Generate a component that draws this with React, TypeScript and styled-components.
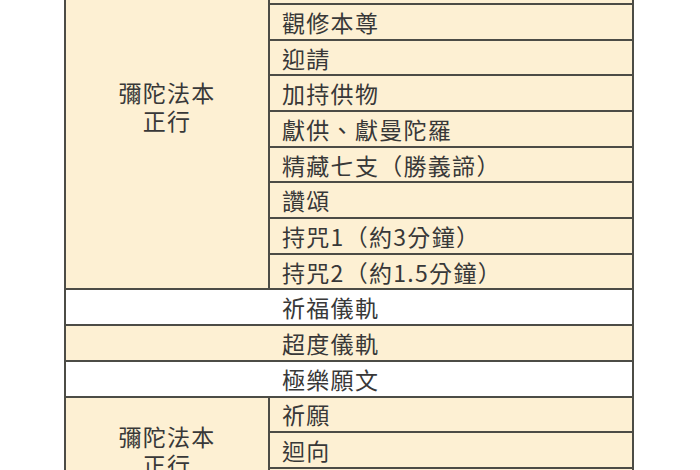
import React from 'react';
import styled, { createGlobalStyle } from 'styled-components';

const GlobalStyle = createGlobalStyle`
  html, body {
    margin: 0;
    padding: 0;
    background: #ffffff;
    overflow: hidden;
  }
  body {
    font-family: "Noto Sans CJK TC", "Noto Sans", sans-serif;
  }
`;

type Step = { label: string; tall?: boolean };

type Block =
  | { kind: 'group'; title: string[]; steps: Step[] }
  | { kind: 'single'; label: string; tone: 'white' | 'cream' };

// the first two steps sit above the visible crop
const blocks: Block[] = [
  {
    kind: 'group',
    title: ['彌陀法本', '正行'],
    steps: [
      { label: '皈依發心', tall: true },
      { label: '淨除障礙' },
      { label: '觀修本尊' },
      { label: '迎請' },
      { label: '加持供物' },
      { label: '獻供、獻曼陀羅' },
      { label: '精藏七支（勝義諦）' },
      { label: '讚頌' },
      { label: '持咒1（約3分鐘）' },
      { label: '持咒2（約1.5分鐘）' },
    ],
  },
  { kind: 'single', label: '祈福儀軌', tone: 'white' },
  { kind: 'single', label: '超度儀軌', tone: 'cream' },
  { kind: 'single', label: '極樂願文', tone: 'white' },
  {
    kind: 'group',
    title: ['彌陀法本', '正行'],
    steps: [{ label: '祈願' }, { label: '迴向' }, { label: '吉祥文' }],
  },
];

const colors = {
  cream: '#fdf0d3',
  white: '#ffffff',
  line: '#4c4c46',
  text: '#383838',
};

export default function App() {
  return (
    <>
      <GlobalStyle />
      <Page>
        <Table>
          {blocks.map((block, i) =>
            block.kind === 'group' ? (
              <Group key={i}>
                <TitleCell $rows={block.steps.length}>
                  {block.title.map((line) => (
                    <TitleLine key={line}>{line}</TitleLine>
                  ))}
                </TitleCell>
                {block.steps.map((step) => (
                  <StepCell key={step.label} $tall={step.tall}>
                    {step.label}
                  </StepCell>
                ))}
              </Group>
            ) : (
              <WideCell key={i} $tone={block.tone}>
                {block.label}
              </WideCell>
            )
          )}
        </Table>
      </Page>
    </>
  );
}

const Page = styled.div`
  width: 700px;
  height: 470px;
  overflow: hidden;
`;

const Table = styled.div`
  margin: -77.4px 0 0 64px;
  width: 570px;
  box-sizing: border-box;
  display: flex;
  flex-direction: column;
  gap: 2px;
  padding: 2px;
  background: ${colors.line};
  color: ${colors.text};
  font-size: 23px;
  letter-spacing: 1.3px;
`;

const Group = styled.div`
  display: grid;
  grid-template-columns: 202px 362px;
  gap: 2px;
`;

const TitleCell = styled.div<{ $rows: number }>`
  grid-column: 1;
  grid-row: 1 / span ${({ $rows }) => $rows};
  background: ${colors.cream};
  display: flex;
  flex-direction: column;
  align-items: center;
  justify-content: center;
  gap: 5px;
`;

const TitleLine = styled.span`
  line-height: 23px;
`;

const StepCell = styled.div<{ $tall?: boolean }>`
  grid-column: 2;
  height: ${({ $tall }) => ($tall ? '42.7px' : '33.7px')};
  background: ${colors.cream};
  display: flex;
  align-items: center;
  padding-left: 12px;
  white-space: nowrap;
`;

const WideCell = styled.div<{ $tone: 'white' | 'cream' }>`
  height: 33.7px;
  background: ${({ $tone }) => colors[$tone]};
  display: flex;
  align-items: center;
  padding-left: 216px;
  white-space: nowrap;
`;
